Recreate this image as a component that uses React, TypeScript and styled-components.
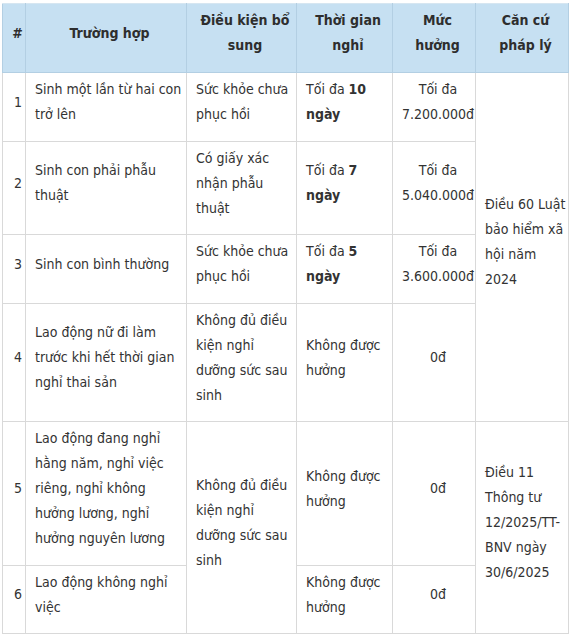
import React from "react";
import styled, { createGlobalStyle } from "styled-components";

const Global = createGlobalStyle`
  html, body { margin: 0; padding: 0; background: #ffffff; }
  body { font-family: "DejaVu Sans Condensed", "DejaVu Sans", sans-serif; }
`;

const Page = styled.div`
  padding: 3px 0 0 2px;
`;

const Table = styled.table`
  border-collapse: collapse;
  table-layout: fixed;
  width: 566px;
  color: #333333;
  font-size: 14px;
  line-height: 25px;
`;

const Th = styled.th`
  background: #c6e0f2;
  border: 1px solid #b3cfe3;
  border-top-color: #d6e6f1;
  font-weight: bold;
  text-align: center;
  vertical-align: middle;
  padding: 4px 0 4px 7px;
  color: #2e2e2e;
  white-space: nowrap;
`;

const Td = styled.td<{ $align?: "left" | "center" }>`
  border: 1px solid #d9d9d9;
  text-align: ${(p) => p.$align ?? "left"};
  vertical-align: middle;
  padding: ${(p) => (p.$align === "center" ? "4px 0 3.5px 8px" : "4px 6px 3.5px 9px")};
  white-space: nowrap;
`;

const P = styled.p`
  margin: 0 0 10px 0;
`;

type Row = {
  n: string;
  c: string[];
  d?: string[];
  dSpan?: number;
  t: React.ReactNode[];
  m: string[];
  law?: string[];
  lawSpan?: number;
};

const rows: Row[] = [
  {
    n: "1",
    c: ["Sinh một lần từ hai con", "trở lên"],
    d: ["Sức khỏe chưa", "phục hồi"],
    t: [<>Tối đa <b>10</b></>, <b>ngày</b>],
    m: ["Tối đa", "7.200.000đ"],
    law: ["Điều 60 Luật", "bảo hiểm xã", "hội năm", "2024"],
    lawSpan: 4,
  },
  {
    n: "2",
    c: ["Sinh con phải phẫu", "thuật"],
    d: ["Có giấy xác", "nhận phẫu", "thuật"],
    t: [<>Tối đa <b>7</b></>, <b>ngày</b>],
    m: ["Tối đa", "5.040.000đ"],
  },
  {
    n: "3",
    c: ["Sinh con bình thường"],
    d: ["Sức khỏe chưa", "phục hồi"],
    t: [<>Tối đa <b>5</b></>, <b>ngày</b>],
    m: ["Tối đa", "3.600.000đ"],
  },
  {
    n: "4",
    c: ["Lao động nữ đi làm", "trước khi hết thời gian", "nghỉ thai sản"],
    d: ["Không đủ điều", "kiện nghỉ", "dưỡng sức sau", "sinh"],
    t: ["Không được", "hưởng"],
    m: ["0đ"],
  },
  {
    n: "5",
    c: [
      "Lao động đang nghỉ",
      "hằng năm, nghỉ việc",
      "riêng, nghỉ không",
      "hưởng lương, nghỉ",
      "hưởng nguyên lương",
    ],
    d: ["Không đủ điều", "kiện nghỉ", "dưỡng sức sau", "sinh"],
    dSpan: 2,
    t: ["Không được", "hưởng"],
    m: ["0đ"],
    law: ["Điều 11", "Thông tư", "12/2025/TT-", "BNV ngày", "30/6/2025"],
    lawSpan: 2,
  },
  {
    n: "6",
    c: ["Lao động không nghỉ", "việc"],
    t: ["Không được", "hưởng"],
    m: ["0đ"],
  },
];

const Lines = ({ items }: { items: React.ReactNode[] }) => (
  <P>
    {items.map((x, i) => (
      <React.Fragment key={i}>
        {i > 0 && <br />}
        {x}
      </React.Fragment>
    ))}
  </P>
);

export default function App() {
  return (
    <Page>
      <Global />
      <Table>
        <colgroup>
          <col style={{ width: 23 }} />
          <col style={{ width: 161 }} />
          <col style={{ width: 110 }} />
          <col style={{ width: 96 }} />
          <col style={{ width: 83 }} />
          <col style={{ width: 93 }} />
        </colgroup>
        <thead>
          <tr>
            <Th>
              <Lines items={["#"]} />
            </Th>
            <Th>
              <Lines items={["Trường hợp"]} />
            </Th>
            <Th>
              <Lines items={["Điều kiện bổ", "sung"]} />
            </Th>
            <Th>
              <Lines items={["Thời gian", "nghỉ"]} />
            </Th>
            <Th>
              <Lines items={["Mức", "hưởng"]} />
            </Th>
            <Th>
              <Lines items={["Căn cứ", "pháp lý"]} />
            </Th>
          </tr>
        </thead>
        <tbody>
          {rows.map((r) => (
            <tr key={r.n}>
              <Td $align="center">
                <Lines items={[r.n]} />
              </Td>
              <Td>
                <Lines items={r.c} />
              </Td>
              {r.d && (
                <Td rowSpan={r.dSpan}>
                  <Lines items={r.d} />
                </Td>
              )}
              <Td>
                <Lines items={r.t} />
              </Td>
              <Td $align="center">
                <Lines items={r.m} />
              </Td>
              {r.law && (
                <Td rowSpan={r.lawSpan}>
                  <Lines items={r.law} />
                </Td>
              )}
            </tr>
          ))}
        </tbody>
      </Table>
    </Page>
  );
}
